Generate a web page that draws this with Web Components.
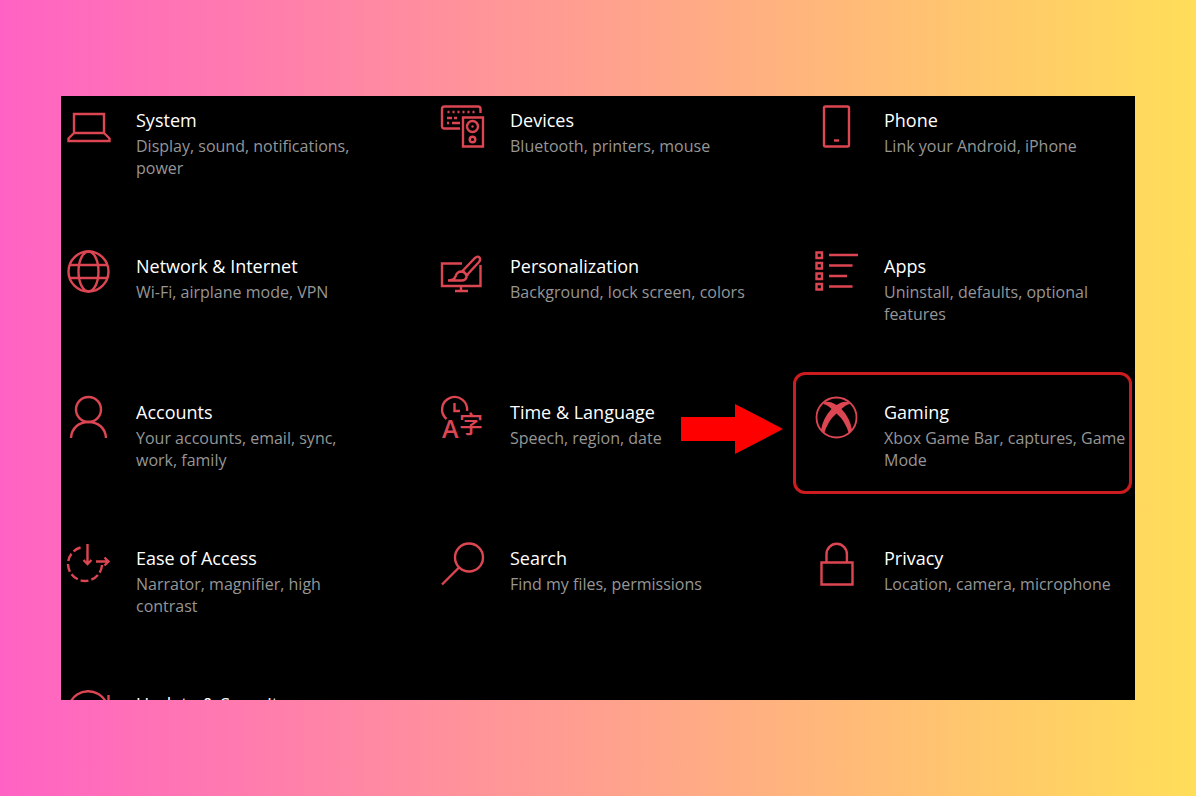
<!DOCTYPE html>
<html lang="en">
<head>
<meta charset="utf-8">
<meta name="viewport" content="width=device-width, initial-scale=1">
<title>Settings</title>
<style>
  body { margin: 0; font-family: "Open Sans", "Noto Sans", sans-serif; }
</style>
</head>
<body>
<settings-page>
  <settings-item icon="system" name="System">Display, sound, notifications, power</settings-item>
  <settings-item icon="devices" name="Devices">Bluetooth, printers, mouse</settings-item>
  <settings-item icon="phone" name="Phone">Link your Android, iPhone</settings-item>
  <settings-item icon="network" name="Network &amp; Internet">Wi-Fi, airplane mode, VPN</settings-item>
  <settings-item icon="personalization" name="Personalization">Background, lock screen, colors</settings-item>
  <settings-item icon="apps" name="Apps">Uninstall, defaults, optional features</settings-item>
  <settings-item icon="accounts" name="Accounts">Your accounts, email, sync, work, family</settings-item>
  <settings-item icon="time" name="Time &amp; Language">Speech, region, date</settings-item>
  <settings-item icon="gaming" name="Gaming" marked>Xbox Game Bar, captures, Game Mode</settings-item>
  <settings-item icon="ease" name="Ease of Access">Narrator, magnifier, high contrast</settings-item>
  <settings-item icon="search" name="Search">Find my files, permissions</settings-item>
  <settings-item icon="privacy" name="Privacy">Location, camera, microphone</settings-item>
  <settings-item icon="update" name="Update &amp; Security">Windows Update, recovery, backup</settings-item>
</settings-page>

<script>
const ICONS = {
  system: '<path d="M6 9h30v19H6zM6 28L.5 33.500V36h41v-2.500L36 28"/>',
  devices: '<path d="M18 23.500H2.500Q0 23.500 0 21V4Q0 1.500 2.500 1.500H36Q38.500 1.500 38.500 4V8"/><path d="M5.500 7h28" stroke-dasharray="2 3"/><path d="M5 13h5M12 13h3M5 18h2M10 18h8"/><path d="M21 12.500h20v29H21z"/><circle cx="30.500" cy="21.500" r="5.500"/><circle cx="30.500" cy="21.500" r="1.200" fill="currentColor" stroke="none"/><circle cx="30.500" cy="34.500" r="2.800"/>',
  phone: '<rect x="8" y="1.500" width="25" height="40" rx="1.500"/><path d="M18 35.500h5"/>',
  network: '<circle cx="20.500" cy="20.500" r="20"/><ellipse cx="20.500" cy="20.500" rx="10" ry="20"/><path d="M2 14h37M2 27h37"/>',
  personalization: '<path d="M20 12.500H0V35h38.500V14M19 35v5M13 40h13"/><path d="M20 20.500L33 7Q36 4.500 37.500 6.500T37 11L24 25"/><path d="M6 29.500Q12 29.500 13.500 25.500Q15 20.500 19.500 20.500Q24.500 21.500 24.500 26Q23.500 30 19 29.500H6M21 20l5 5"/>',
  apps: '<path d="M.5 1.500h5.500v5.500H.5zM.5 12H6v5.500H.5zM.5 22.500H6V28H.5zM.5 33H6v5.500H.5zM13 4h29M13 14.500h23.500M13 25h18M13 35.500h23.500"/>',
  accounts: '<circle cx="20.500" cy="12.500" r="12.500"/><path d="M3 41C3.500 31 11 25 20.500 25S37.500 31 38 41"/>',
  time: '<path d="M4.500 22A12.500 12.500 0 1 1 25 14M12.500 6v8H18"/><g class="letters"><text x="0" y="41" font-family="Open Sans, sans-serif" font-size="25" font-weight="600">A</text><text x="17" y="36" font-family="Noto Sans CJK SC, sans-serif" font-size="24" font-weight="500">字</text></g>',
  gaming: '<circle cx="20.500" cy="20.500" r="20" stroke-width="1.800"/><path class="solid" d="M9 5Q14 3.500 20.500 8Q27 3.500 32 5L34 7Q30 7.500 25.500 12Q34 21 36 33L33 37Q29.500 24 20.500 16.500Q11.500 24 8 37L5 33Q7 21 15.500 12Q11 7.500 7 7Z"/>',
  ease: '<path d="M34 22A17 17 0 1 1 15.500 4" stroke-dasharray="8 3"/><path d="M19.500 1v20M15.500 17l4 4 4-4M28 18.500h12M36.500 14.500l4 4-4 4"/>',
  search: '<circle cx="27" cy="14.500" r="14"/><path d="M0 41.500l17-17"/>',
  privacy: '<path d="M5.500 19.500h31v22h-31zM10.500 19.500V11a10.200 10.200 0 0 1 20.400 0v8.500"/>',
  update: '<path d="M2 14A20 20 0 0 1 38 13M40.500 6v9H31M2 28A20 20 0 0 0 38 28"/>'
};

class SettingsIcon extends HTMLElement {
  constructor() { super(); this.attachShadow({ mode: "open" }); }
  connectedCallback() {
    this.shadowRoot.innerHTML = `
      <style>
        :host { display: block; color: #dc4652; }
        svg { display: block; width: 42px; height: 42px; overflow: visible; fill: none; stroke: currentColor; stroke-width: 2.4; }
        .solid, .letters { fill: currentColor; stroke: none; }
      </style>
      <svg viewBox="0 0 42 42" aria-hidden="true">${ICONS[this.getAttribute("name")]}</svg>`;
  }
}
customElements.define("settings-icon", SettingsIcon);

class SettingsItem extends HTMLElement {
  constructor() { super(); this.attachShadow({ mode: "open" }); }
  connectedCallback() {
    this.shadowRoot.innerHTML = `
      <style>
        :host { display: block; position: relative; }
        a { display: grid; grid-template-columns: 42px minmax(0, 244px); column-gap: 26px; padding-top: 9px; color: inherit; text-decoration: none; }
        h2 { margin: 2px 0; font-size: 18px; line-height: 26px; font-weight: 400; color: #fff; white-space: nowrap; }
        p { margin: 0; font-size: 16px; line-height: 22px; color: #969696; }
        .frame { position: absolute; inset: -16px 3px 40px -23px; border: 3px solid #cd1c20; border-radius: 12px; pointer-events: none; }
        .arrow { position: absolute; top: 16px; right: calc(100% + 33px); width: 102px; height: 50px; fill: #f00; }
      </style>
      <a href="#${this.getAttribute("icon")}">
        <settings-icon name="${this.getAttribute("icon")}"></settings-icon>
        <div><h2></h2><p><slot></slot></p></div>
      </a>
      ${this.hasAttribute("marked") ? '<div class="frame"></div><svg class="arrow" viewBox="0 0 102 50" aria-hidden="true"><path d="M0 13h54V0l48 25L54 50V37H0z"/></svg>' : ""}`;
    this.shadowRoot.querySelector("h2").textContent = this.getAttribute("name");
  }
}
customElements.define("settings-item", SettingsItem);

class SettingsPage extends HTMLElement {
  constructor() {
    super();
    this.attachShadow({ mode: "open" }).innerHTML = `
      <style>
        :host { display: flex; box-sizing: border-box; height: 100vh; padding: 96px 61px; background: linear-gradient(90deg, #ff62c4, #ffde59); }
        main { flex: 1; min-width: 0; box-sizing: border-box; padding-left: 7px; overflow: hidden; background: #000; display: grid; grid-template-columns: 374fr 374fr 319fr; grid-auto-rows: 146px; }
      </style>
      <main><slot></slot></main>`;
  }
}
customElements.define("settings-page", SettingsPage);
</script>
</body>
</html>
